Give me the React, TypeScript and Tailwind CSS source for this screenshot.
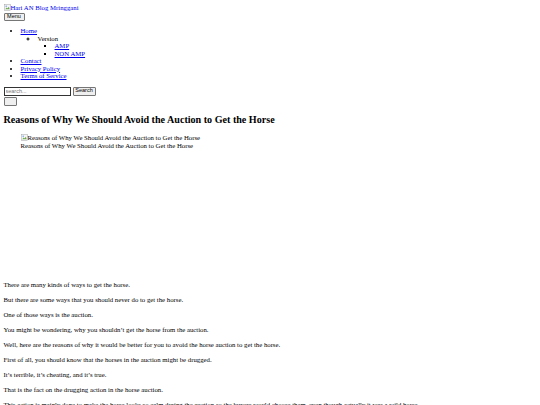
import React from "react";

const paragraphs = [
  "There are many kinds of ways to get the horse.",
  "But there are some ways that you should never do to get the horse.",
  "One of those ways is the auction.",
  "You might be wondering, why you shouldn\u2019t get the horse from the auction.",
  "Well, here are the reasons of why it would be better for you to avoid the horse auction to get the horse.",
  "First of all, you should know that the horses in the auction might be drugged.",
  "It\u2019s terrible, it\u2019s cheating, and it\u2019s true.",
  "That is the fact on the drugging action in the horse auction.",
  "This action is mainly done to make the horse looks so calm during the auction so the buyers would choose them, even though actually it was a wild horse.",
];

function BrokenImage({ alt }: { alt: string }) {
  return (
    <span className="inline-flex items-end">
      <svg width="7" height="7" viewBox="0 0 16 16" className="mb-[1px]">
        <rect x="1" y="1" width="14" height="14" fill="#f4f4f4" stroke="#9a9a9a" />
        <path d="M3 12 L6 8 L8 10 L11 6 L13 12 Z" fill="#6aa84f" />
        <circle cx="5" cy="5" r="1.5" fill="#4a86e8" />
      </svg>
      {alt}
    </span>
  );
}

const btn =
  "border border-[#767676] rounded-[1px] bg-[#efefef] text-[5.5px] leading-none text-black font-['Liberation_Sans',sans-serif]";

export default function App() {
  const serif = { fontFamily: '"Liberation Serif", "Times New Roman", serif' };
  return (
    <div
      className="bg-white text-black text-[6.75px] leading-[7.5px] p-[3.5px] h-[405px] overflow-hidden"
      style={serif}
    >
      <a href="#" className="text-[#0000ee] underline">
        <BrokenImage alt="Hari AN Blog Mringgani" />
      </a>
      <div className="h-[8px]">
        <button className={`${btn} h-[8px] w-[21px]`}>Menu</button>
      </div>
      <ul className="list-disc pl-[17px] my-[7px]">
        <li>
          <a href="#" className="text-[#0000ee] underline">Home</a>
          <ul className="list-[circle] pl-[17px]">
            <li>
              Version
              <ul className="list-[square] pl-[17px]">
                <li>
                  <a href="#" className="text-[#0000ee] underline">AMP</a>
                </li>
                <li>
                  <a href="#" className="text-[#0000ee] underline">NON AMP</a>
                </li>
              </ul>
            </li>
          </ul>
        </li>
        <li>
          <a href="#" className="text-[#0000ee] underline">Contact</a>
        </li>
        <li>
          <a href="#" className="text-[#0000ee] underline">Privacy Policy</a>
        </li>
        <li>
          <a href="#" className="text-[#0000ee] underline">Terms of Service</a>
        </li>
      </ul>
      <form className="flex items-center gap-[2px]" onSubmit={(e) => e.preventDefault()}>
        <input
          placeholder="search..."
          className="w-[67px] h-[9px] border border-[#333] px-[1px] text-[5.5px] font-['Liberation_Sans',sans-serif] placeholder:text-[#757575]"
        />
        <button className={`${btn} h-[9px] w-[23px]`}>Search</button>
      </form>
      <button className={`${btn} block w-[13px] h-[9px] mt-[1px]`} />
      <h1 className="text-[10.1px] leading-[11.6px] font-bold mt-[8.4px] mb-[8.4px]">
        Reasons of Why We Should Avoid the Auction to Get the Horse
      </h1>
      <figure className="ml-[17px] h-[140px]">
        <BrokenImage alt="Reasons of Why We Should Avoid the Auction to Get the Horse" />
        <figcaption>Reasons of Why We Should Avoid the Auction to Get the Horse</figcaption>
      </figure>
      <div className="mt-[6.8px]">
        {paragraphs.map((p, i) => (
          <p key={i} className="leading-[8.3px] mb-[6.8px] whitespace-nowrap">
            {p}
          </p>
        ))}
      </div>
    </div>
  );
}
